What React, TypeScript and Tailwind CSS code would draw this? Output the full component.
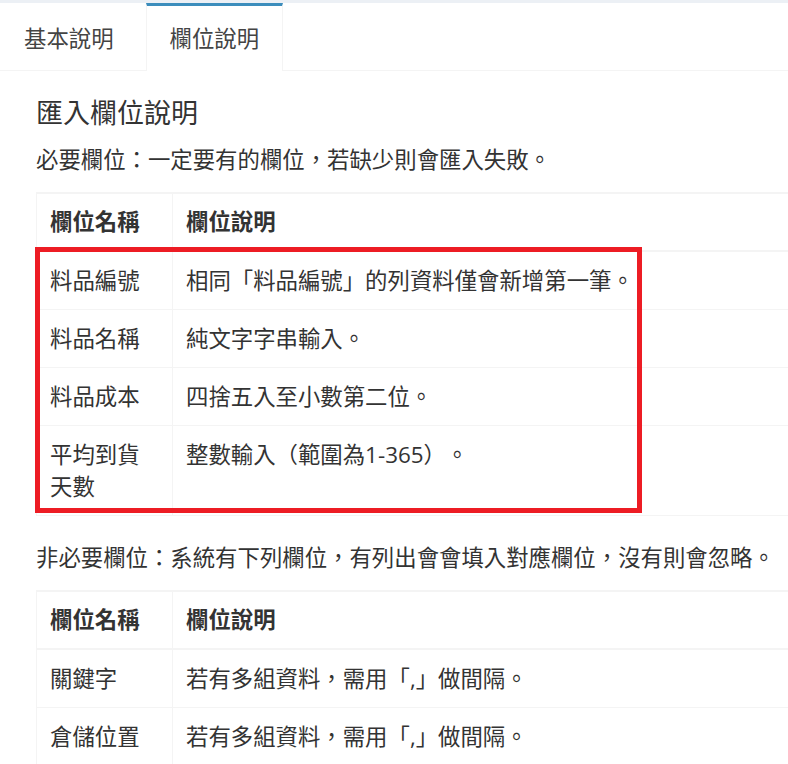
import React from "react";

const font = { fontFamily: '"Open Sans", "Noto Sans CJK TC", sans-serif' };

type Row = { name: string[]; desc: string };

const required: Row[] = [
  { name: ["料品編號"], desc: "相同「料品編號」的列資料僅會新增第一筆。" },
  { name: ["料品名稱"], desc: "純文字字串輸入。" },
  { name: ["料品成本"], desc: "四捨五入至小數第二位。" },
  { name: ["平均到貨", "天數"], desc: "整數輸入（範圍為1-365）。" },
];

const optional: Row[] = [
  { name: ["關鍵字"], desc: "若有多組資料，需用「,」做間隔。" },
  { name: ["倉儲位置"], desc: "若有多組資料，需用「,」做間隔。" },
];

function FieldTable({ rows }: { rows: Row[] }) {
  return (
    <table className="w-[780px] border-collapse border-t-2 border-l border-[#f4f4f4] text-left">
      <thead>
        <tr>
          <th className="w-[136px] border-r border-b-2 border-[#f4f4f4] px-[13px] pt-[12px] pb-[12px] font-bold leading-[32px]">
            欄位名稱
          </th>
          <th className="border-r border-b-2 border-[#f4f4f4] px-[13px] pt-[12px] pb-[12px] font-bold leading-[32px]">
            欄位說明
          </th>
        </tr>
      </thead>
      <tbody>
        {rows.map((r, i) => (
          <tr key={i}>
            <td className="border border-[#f4f4f4] px-[13px] pt-[13px] pb-[12px] align-top leading-[32px]">
              {r.name.map((n, j) => (
                <div key={j}>{n}</div>
              ))}
            </td>
            <td className="border border-[#f4f4f4] px-[13px] pt-[13px] pb-[12px] align-top leading-[32px]">
              {r.desc}
            </td>
          </tr>
        ))}
      </tbody>
    </table>
  );
}

export default function App() {
  return (
    <div
      lang="zh-Hant"
      className="w-[788px] h-[764px] overflow-hidden bg-[#ecf0f5] pt-[3px] text-[22.4px] text-[#333333] [text-spacing-trim:space-all]"
      style={font}
    >
      <div className="bg-white">
        <div className="flex border-b border-[#f4f4f4]">
          <div className="mr-[8px] -mb-px border-t-[3px] border-x border-transparent px-[23px] pt-[17px] pb-[15px] leading-[32px] text-[#444444]">
            基本說明
          </div>
          <div className="-mb-px border-t-[3px] border-t-[#3c8dbc] border-x border-x-[#f4f4f4] bg-white px-[23px] pt-[17px] pb-[16px] leading-[32px] text-[#444444]">
            欄位說明
          </div>
        </div>
        <div className="pl-[36px] pt-[27px] h-[700px]">
          <h3 className="m-0 text-[27px] font-normal leading-[30px] mb-[16px]">
            匯入欄位說明
          </h3>
          <p className="leading-[32px] mb-[16px]">
            必要欄位：一定要有的欄位，若缺少則會匯入失敗。
          </p>
          <div className="relative mb-[26px]">
            <FieldTable rows={required} />
            <div className="absolute left-[-1px] top-[55px] w-[607px] h-[266px] border-[5px] border-[#ed1c24] pointer-events-none" />
          </div>
          <p className="leading-[32px] mb-[16px]">
            非必要欄位：系統有下列欄位，有列出會會填入對應欄位，沒有則會忽略。
          </p>
          <FieldTable rows={optional} />
        </div>
      </div>
    </div>
  );
}
